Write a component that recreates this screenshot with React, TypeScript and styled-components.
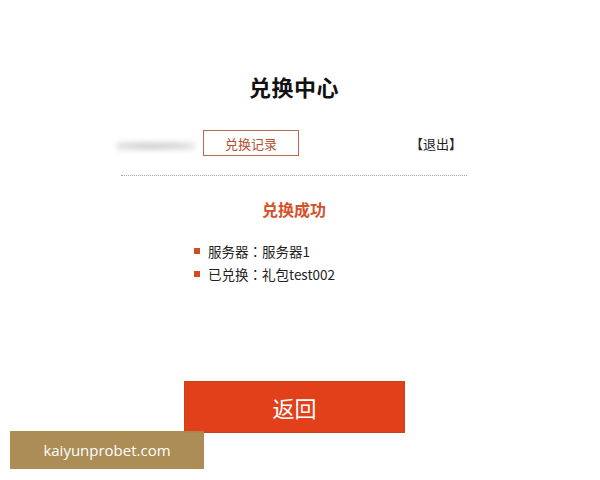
import React from 'react'
import styled, { createGlobalStyle } from 'styled-components'

const GlobalStyle = createGlobalStyle`
  html, body {
    margin: 0;
    padding: 0;
    background: #ffffff;
  }
  body {
    font-family: "Microsoft YaHei", "Noto Sans CJK SC", "Liberation Sans", sans-serif;
    color: #222222;
  }
`

const Page = styled.div`
  position: relative;
  width: 600px;
  height: 480px;
  box-sizing: border-box;
  padding: 71px 133px 0 121px;
`

const Title = styled.h1`
  margin: 0;
  font-size: 22px;
  line-height: 30px;
  font-weight: bold;
  text-align: center;
  letter-spacing: 0.5px;
  color: #111111;
`

const UserRow = styled.div`
  display: flex;
  align-items: center;
  height: 26px;
  margin-top: 29px;
`

const BlurName = styled.div`
  width: 78px;
  height: 8px;
  margin-left: -4px;
  margin-top: 6px;
  background: linear-gradient(90deg, #e4e4e4, #d4d4d4 40%, #dcdcdc 80%, #ececec);
  filter: blur(2.5px);
`

const RecordButton = styled.button`
  box-sizing: border-box;
  width: 96px;
  height: 26px;
  margin-left: 8px;
  border: 1px solid #b86a50;
  background: #ffffff;
  color: #b2502f;
  font-family: inherit;
  font-size: 13px;
  padding: 0;
  cursor: pointer;
`

const Logout = styled.a`
  margin-left: auto;
  margin-right: 5px;
  font-size: 13px;
  color: #222222;
  text-decoration: none;
  cursor: pointer;
`

const Divider = styled.hr`
  margin: 19px 0 0;
  border: none;
  border-top: 1px dotted #a8a8a8;
`

const SuccessTitle = styled.h2`
  margin: 22px 0 0;
  font-size: 16px;
  line-height: 22px;
  font-weight: bold;
  text-align: center;
  color: #d4512a;
`

const InfoList = styled.ul`
  list-style: none;
  margin: 19px 0 0 73px;
  padding: 0;
`

const InfoItem = styled.li`
  display: flex;
  align-items: center;
  height: 23px;
  font-family: "Noto Sans CJK JP", "Noto Sans CJK SC", sans-serif;
  font-size: 13.5px;
  color: #222222;
  &::before {
    content: '';
    width: 6px;
    height: 6px;
    margin-right: 8px;
    background: #d44a22;
  }
`

const BackButton = styled.button`
  display: block;
  box-sizing: border-box;
  width: 221px;
  height: 52px;
  margin: 96px 0 0 63px;
  border: 1px solid #c9441d;
  background: #e1401a;
  color: #ffffff;
  font-family: inherit;
  font-size: 22px;
  padding: 0;
  cursor: pointer;
`

const Watermark = styled.div`
  position: absolute;
  left: 10px;
  top: 431px;
  width: 194px;
  height: 38px;
  display: flex;
  align-items: center;
  justify-content: center;
  background: rgba(168, 137, 80, 0.97);
  color: #ffffff;
  font-family: "Open Sans", "Liberation Sans", sans-serif;
  font-size: 15px;
`

export default function App() {
  return (
    <>
      <GlobalStyle />
      <Page>
        <Title>兑换中心</Title>
        <UserRow>
          <BlurName />
          <RecordButton>兑换记录</RecordButton>
          <Logout>【退出】</Logout>
        </UserRow>
        <Divider />
        <SuccessTitle>兑换成功</SuccessTitle>
        <InfoList>
          <InfoItem>服务器：服务器1</InfoItem>
          <InfoItem>已兑换：礼包test002</InfoItem>
        </InfoList>
        <BackButton>返回</BackButton>
        <Watermark>kaiyunprobet.com</Watermark>
      </Page>
    </>
  )
}
